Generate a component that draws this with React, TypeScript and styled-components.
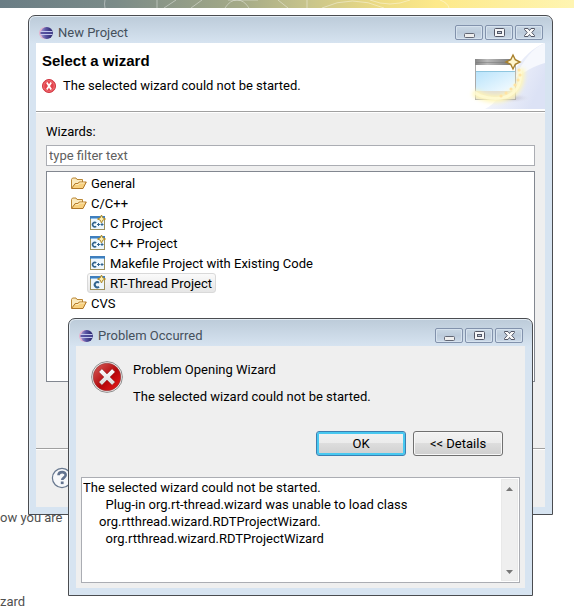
import React from "react";
import styled, { createGlobalStyle, css } from "styled-components";

const Global = createGlobalStyle`
  *, *::before, *::after { box-sizing: border-box; }
  html, body { margin: 0; background: #fff; }
  body, button, input, textarea {
    font-family: Roboto, "Noto Sans", sans-serif;
    font-size: 13px;
    line-height: 17px;
    color: #000;
  }
  h1, h2, p, ul { margin: 0; padding: 0; font-weight: 400; font-size: 13px; }
`;

const Page = styled.div`
  position: relative;
  min-height: 100vh;
  overflow: hidden;
  display: flex;
  flex-direction: column;
`;

const Banner = styled.svg`
  display: block;
  width: 100%;
  height: 8px;
`;

const Article = styled.main`
  display: flex;
  flex-direction: column;
  gap: 67px;
  padding-top: 501px;
  color: #505050;
  white-space: nowrap;
`;

const WindowFrame = styled.section<{ $top: number; $left: number; $right: number; $height: number }>`
  position: absolute;
  top: ${(p) => p.$top}px;
  left: ${(p) => p.$left}px;
  right: ${(p) => p.$right}px;
  min-height: ${(p) => p.$height}px;
  display: flex;
  flex-direction: column;
  padding: 0 7px 7px;
  border: 1px solid #4a4c50;
  border-radius: 7px 7px 0 0;
  background: linear-gradient(#bccbd9, #d7e4f1 28px);
  box-shadow: inset 0 1px #e4edf5, inset 1px 0 #e4edf5;
`;

const TitleBar = styled.header`
  display: flex;
  align-items: center;
  gap: 5px;
  height: 27px;
  padding: 6px 2px 0 3px;
`;

const Title = styled.h1`
  flex: 1;
  color: #45505c;
`;

const Captions = styled.div`
  display: flex;
  gap: 2px;
`;

const CaptionButton = styled.button`
  display: grid;
  place-items: center;
  width: 28px;
  height: 15px;
  padding: 0;
  border: 1px solid #8292ac;
  border-radius: 2px;
  background: linear-gradient(#cad8e5, #bccbdb 50%, #cbd9e8);
  box-shadow: inset 0 0 0 1px #d6e2ee;
`;

const Client = styled.div`
  flex: 1;
  display: flex;
  flex-direction: column;
  background: #efefef;
`;

const WizardHeader = styled.div`
  display: flex;
  justify-content: space-between;
  height: 69px;
  padding-left: 6px;
  border-bottom: 1px solid #a0a0a0;
  background: #fff;
`;

const HeaderText = styled.div`
  display: flex;
  flex-direction: column;
  gap: 8px;
  padding-top: 9px;
`;

const HeaderTitle = styled.h2`
  font: 700 15px/17px "Liberation Sans", Arial, sans-serif;
`;

const Message = styled.p`
  display: flex;
  align-items: center;
  gap: 7px;
`;

const WizardBody = styled.div`
  flex: 1;
  display: flex;
  flex-direction: column;
  padding: 10px 10px 66px;
  border-top: 1px solid #fff;
`;

const FilterLabel = styled.label`
  margin-bottom: 5px;
`;

const Filter = styled.input`
  width: 100%;
  height: 21px;
  margin-bottom: 5px;
  padding: 0 2px;
  border: 1px solid #abadb3;
  background: #fff;
  &::placeholder { color: #606060; opacity: 1; }
`;

const Tree = styled.ul`
  flex: 1;
  padding: 1px 0;
  border: 1px solid #828790;
  background: #fff;
  list-style: none;
`;

const TreeItem = styled.li<{ $level: number }>`
  display: flex;
  align-items: center;
  height: 20px;
  padding-left: ${(p) => (p.$level === 1 ? 21 : 40)}px;
`;

const ItemLabel = styled.span<{ $selected?: boolean }>`
  display: flex;
  align-items: center;
  gap: 4px;
  height: 20px;
  padding: 0 3px 0 2px;
  border: 1px solid transparent;
  border-radius: 3px;
  ${(p) =>
    p.$selected &&
    css`
      border-color: #d9d9d9;
      background: linear-gradient(#fafafa, #e6e6e6);
    `}
`;

const WizardFooter = styled.footer`
  height: 59px;
  padding: 18px 15px;
  border-top: 1px solid #a0a0a0;
  box-shadow: inset 0 1px #fff;
`;

const IconButton = styled.button`
  display: block;
  padding: 0;
  border: 0;
  background: none;
`;

const Problem = styled.div`
  display: flex;
  gap: 10px;
  padding: 15px 15px 0;
`;

const ProblemText = styled.div`
  display: flex;
  flex-direction: column;
  gap: 10px;
`;

const Actions = styled.div`
  display: flex;
  justify-content: flex-end;
  gap: 7px;
  padding: 26px 22px 21px;
`;

const PushButton = styled.button<{ $primary?: boolean }>`
  width: 90px;
  height: 25px;
  padding: 0;
  border: 1px solid ${(p) => (p.$primary ? "#3c7fb1" : "#707070")};
  border-radius: 3px;
  background: linear-gradient(#f2f2f2, #ebebeb 50%, #dddddd 50%, #cfcfcf);
  box-shadow: inset 0 0 0 ${(p) => (p.$primary ? "2px #48c8f0" : "1px #f7f7f7")};
`;

const DetailsBox = styled.div`
  display: flex;
  height: 106px;
  margin: 0 5px;
  padding: 1px;
  border: 1px solid #abadb3;
  background: #fff;
`;

const DetailsText = styled.textarea`
  flex: 1;
  min-width: 0;
  padding: 0;
  border: 0;
  outline: 0;
  resize: none;
  overflow: hidden;
  white-space: pre;
  background: transparent;
`;

const ScrollTrack = styled.div`
  display: flex;
  flex-direction: column;
  justify-content: space-between;
  width: 17px;
  border: 1px solid #e9e9e9;
  background: #efefef;
`;

const ScrollButton = styled.button`
  display: grid;
  place-items: center;
  height: 17px;
  padding: 0;
  border: 0;
  background: none;
`;

const EclipseIcon = () => (
  <svg width="14" height="14" viewBox="0 0 14 14" aria-hidden="true">
    <defs>
      <linearGradient id="ecl">
        <stop offset="0" stopColor="#a99bcf" />
        <stop offset=".4" stopColor="#5b57a5" />
        <stop offset="1" stopColor="#252067" />
      </linearGradient>
    </defs>
    <circle cx="6" cy="7" r="6" fill="#e3b3cf" />
    <circle cx="7.8" cy="7" r="6.1" fill="url(#ecl)" />
    <path d="M1.500 5.500h12M1.500 8.500h12" stroke="#c3c8ec" />
    <path d="M1.500 7h12" stroke="#4d4a99" strokeWidth="1.600" />
  </svg>
);

const SmallError = () => (
  <svg width="14" height="14" viewBox="0 0 14 14" aria-hidden="true">
    <circle cx="7" cy="7" r="6.500" fill="#e4434c" stroke="#cf3640" />
    <circle cx="7" cy="7" r="5.300" fill="none" stroke="#f07c80" strokeWidth=".8" />
    <path d="M4.800 3.500l4.400 7M9.200 3.500l-4.400 7" stroke="#fff" strokeWidth="1.700" />
  </svg>
);

const BigError = () => (
  <svg width="32" height="32" viewBox="0 0 32 32" aria-hidden="true">
    <defs>
      <linearGradient id="red" x1="0" y1="0" x2="1" y2="1">
        <stop offset="0" stopColor="#d9635e" />
        <stop offset=".45" stopColor="#b9181a" />
        <stop offset=".55" stopColor="#b50508" />
        <stop offset="1" stopColor="#ee1c1c" />
      </linearGradient>
      <linearGradient id="cross" x1="0" y1="0" x2="0" y2="1">
        <stop offset="0" stopColor="#fff" />
        <stop offset="1" stopColor="#d8d8d8" />
      </linearGradient>
    </defs>
    <circle cx="16" cy="16" r="15.400" fill="#f6f6f6" stroke="#8d8d8d" />
    <circle cx="16" cy="16" r="13.800" fill="url(#red)" stroke="#8b3635" strokeWidth=".6" />
    <path
      d="M7.800 10.900l3.100-3.100 5.100 5.100 5.100-5.100 3.100 3.100-5.100 5.100 5.100 5.100-3.100 3.100-5.100-5.100-5.100 5.100-3.100-3.100 5.100-5.100z"
      fill="url(#cross)"
      stroke="#8d1515"
      strokeWidth=".5"
    />
  </svg>
);

const FolderIcon = () => (
  <svg width="16" height="16" viewBox="0 0 16 16" aria-hidden="true">
    <path d="M.5 13V4.500l1-1.500h3.500l1 1.500h5.500v3" fill="#fbe9bd" stroke="#b98634" />
    <path d="M.5 13.500l3.700-5h2.800l1.200-1.500h7.100l-3.300 6.500z" fill="#f7d07f" stroke="#b07627" />
    <path d="M4.800 9.500h2.700l1.200-1.500h5" fill="none" stroke="#fdecc0" />
  </svg>
);

const Sparkle = () => (
  <path d="M11.500 0l1.200 2.800 2.800 1.200-2.800 1.200-1.200 2.800-1.200-2.800L7.500 4l2.800-1.200z" fill="#fdf0b4" stroke="#b08a28" />
);

const ProjectIcon = ({ plus, isNew }: { plus: boolean; isNew: boolean }) => (
  <svg width="16" height="16" viewBox="0 0 16 16" aria-hidden="true">
    <rect x=".5" y="1.500" width="14" height="13" fill="#eef7fd" stroke="#9b8f5c" />
    <rect x="0" y="1" width="15" height="3" fill="#3f7fbd" />
    <path d="M1 3.500h13" stroke="#8bbce6" />
    {plus ? (
      <>
        <path d="M6.200 7.900a2.200 2.200 0 1 0 0 3.400" fill="none" stroke="#31648f" strokeWidth="1.600" />
        <path d="M7 9.500h3M8.500 8v3M10.500 9.500h3M12 8v3" stroke="#31648f" />
      </>
    ) : (
      <path d="M9 7.700a2.600 2.600 0 1 0 0 4" fill="none" stroke="#31648f" strokeWidth="2" />
    )}
    {isNew && <Sparkle />}
  </svg>
);

const HelpIcon = () => (
  <svg width="22" height="22" viewBox="0 0 22 22" aria-hidden="true">
    <circle cx="11" cy="11" r="9.600" fill="#f7f8fa" stroke="#68788f" strokeWidth="1.200" />
    <path d="M7.500 8.300c.2-4.200 7.300-4.100 7.200-.2 0 2.500-3.500 2.500-3.500 5" fill="none" stroke="#62738f" strokeWidth="2.600" />
    <rect x="9.800" y="14.500" width="2.800" height="2.600" fill="#62738f" />
  </svg>
);

const WizardArt = () => (
  <svg width="80" height="66" viewBox="0 0 80 66" aria-hidden="true">
    <defs>
      <linearGradient id="sweep" x1="0" y1="0" x2="1" y2=".5">
        <stop offset="0" stopColor="#fff" />
        <stop offset="1" stopColor="#dce2f5" />
      </linearGradient>
      <linearGradient id="bar">
        <stop offset="0" stopColor="#858585" />
        <stop offset=".3" stopColor="#b9b9b9" />
        <stop offset="1" stopColor="#6f6f6f" />
      </linearGradient>
      <linearGradient id="sky" x1="0" y1="0" x2="1" y2="1">
        <stop offset="0" stopColor="#b8e3fb" />
        <stop offset="1" stopColor="#f6fcff" />
      </linearGradient>
      <radialGradient id="shade">
        <stop offset="0" stopColor="#a9a7b9" />
        <stop offset="1" stopColor="#e9ebf8" stopOpacity="0" />
      </radialGradient>
      <filter id="glow" x="-30%" y="-30%" width="160%" height="160%">
        <feGaussianBlur stdDeviation="2" />
      </filter>
    </defs>
    <path d="M20 66C42 57 44 15 80 0v66z" fill="url(#sweep)" />
    <path d="M80 0v20C68 23 62 28 50 35 58 18 67 5 80 0z" fill="#f6f8fd" />
    <ellipse cx="44" cy="55" rx="23" ry="5" fill="url(#shade)" />
    <rect x="10.500" y="16.500" width="40" height="40" fill="#fff" stroke="#aaa" />
    <rect x="10" y="16" width="41" height="6" fill="url(#bar)" />
    <path d="M11 19.500h36" stroke="#777" strokeOpacity=".5" />
    <rect x="11" y="28" width="39" height="20" fill="url(#sky)" />
    <path d="M11 28.500h39" stroke="#8ec6df" />
    <rect x="11" y="48" width="39" height="8" fill="#e4e0d3" />
    <path d="M9 49c13 11 50 12 47-23" fill="none" stroke="#fff6b8" strokeWidth="7" filter="url(#glow)" />
    <path d="M9 49c14 11 51 11 46-23" fill="none" stroke="#fffbd9" strokeWidth="3" strokeOpacity=".7" />
    <path d="M36 53h.1M41 50h.1M46 46h.1M50 42h.1M53 37h.1M55 32h.1M54 27h.1" stroke="#ffe3a3" strokeWidth="3" strokeLinecap="round" />
    <path d="M48 12l2.300 4.700L55 19l-4.700 2.300L48 26l-2.300-4.700L41 19l4.700-2.300z" fill="#fff6cf" stroke="#a8802c" strokeWidth="1.400" />
  </svg>
);

const Glyphs: Record<string, React.ReactNode> = {
  Minimize: <rect x="1.500" y="6.500" width="10" height="4" rx="1" fill="#eee" stroke="#626774" />,
  Maximize: (
    <>
      <rect x="1.500" y="1.500" width="10" height="8" rx="1" fill="#f5f6f8" stroke="#535766" />
      <rect x="4.500" y="4.500" width="4" height="2" fill="#bdcada" stroke="#535766" />
    </>
  ),
  Close: (
    <path
      d="M1.500 1.500h3.500l1.500 2 1.500-2h3.500v1l-2.700 3 2.700 3v1H8l-1.500-2-1.500 2H1.500v-1l2.700-3-2.700-3z"
      fill="#f8f8f8"
      stroke="#535766"
    />
  ),
};

const WindowTitle = ({ title }: { title: string }) => (
  <TitleBar>
    <EclipseIcon />
    <Title>{title}</Title>
    <Captions>
      {Object.keys(Glyphs).map((name) => (
        <CaptionButton key={name} type="button" aria-label={name}>
          <svg width="13" height="11" viewBox="0 0 13 11" aria-hidden="true">
            {Glyphs[name]}
          </svg>
        </CaptionButton>
      ))}
    </Captions>
  </TitleBar>
);

type Entry = { label: string; level: 1 | 2; plus?: boolean; isNew?: boolean; selected?: boolean };

const entries: Entry[] = [
  { label: "General", level: 1 },
  { label: "C/C++", level: 1 },
  { label: "C Project", level: 2, plus: true, isNew: true },
  { label: "C++ Project", level: 2, plus: true, isNew: true },
  { label: "Makefile Project with Existing Code", level: 2, plus: true },
  { label: "RT-Thread Project", level: 2, isNew: true, selected: true },
  { label: "CVS", level: 1 },
];

const details = [
  "The selected wizard could not be started.",
  "       Plug-in org.rt-thread.wizard was unable to load class",
  "     org.rtthread.wizard.RDTProjectWizard.",
  "       org.rtthread.wizard.RDTProjectWizard",
].join("\n");

export default function App() {
  return (
    <>
      <Global />
      <Page>
        <Banner viewBox="0 0 574 8" preserveAspectRatio="none" aria-hidden="true">
          <defs>
            <linearGradient id="banner">
              <stop offset="0" stopColor="#6a7d85" />
              <stop offset=".2" stopColor="#7b8b88" />
              <stop offset=".42" stopColor="#a5aa87" />
              <stop offset=".54" stopColor="#c9c58b" />
              <stop offset=".66" stopColor="#ecdb83" />
              <stop offset=".76" stopColor="#fde98a" />
              <stop offset="1" stopColor="#fff5b2" />
            </linearGradient>
          </defs>
          <rect width="574" height="8" fill="url(#banner)" />
          <path
            d="M105 0q-1 4 0 8M157 0v8M176 0l-12 8M202 0l-11 8M225 8q5-8 12-8t12 8M228 0h30M278 0l10 8M307 0v8M322 8q30-14 62 0M370 0q20 8 40 0M440 0q8 3 9 8"
            fill="none"
            stroke="#fff"
            strokeOpacity=".4"
          />
        </Banner>
        <Article>
          <p>ow you are</p>
          <p>zard</p>
        </Article>

        <WindowFrame $top={15} $left={28} $right={21} $height={500} aria-label="New Project">
          <WindowTitle title="New Project" />
          <Client>
            <WizardHeader>
              <HeaderText>
                <HeaderTitle>Select a wizard</HeaderTitle>
                <Message>
                  <SmallError />
                  The selected wizard could not be started.
                </Message>
              </HeaderText>
              <WizardArt />
            </WizardHeader>
            <WizardBody>
              <FilterLabel htmlFor="filter">Wizards:</FilterLabel>
              <Filter id="filter" type="text" placeholder="type filter text" />
              <Tree role="tree" aria-label="Wizards">
                {entries.map((e) => (
                  <TreeItem key={e.label} role="treeitem" aria-level={e.level} aria-selected={!!e.selected} $level={e.level}>
                    <ItemLabel $selected={e.selected}>
                      {e.level === 1 ? <FolderIcon /> : <ProjectIcon plus={!!e.plus} isNew={!!e.isNew} />}
                      {e.label}
                    </ItemLabel>
                  </TreeItem>
                ))}
              </Tree>
            </WizardBody>
            <WizardFooter>
              <IconButton type="button" aria-label="Help">
                <HelpIcon />
              </IconButton>
            </WizardFooter>
          </Client>
        </WindowFrame>

        <WindowFrame $top={318} $left={68} $right={41} $height={278} role="dialog" aria-label="Problem Occurred">
          <WindowTitle title="Problem Occurred" />
          <Client>
            <Problem>
              <BigError />
              <ProblemText>
                <p>Problem Opening Wizard</p>
                <p>The selected wizard could not be started.</p>
              </ProblemText>
            </Problem>
            <Actions>
              <PushButton type="button" $primary>
                OK
              </PushButton>
              <PushButton type="button">&lt;&lt; Details</PushButton>
            </Actions>
            <DetailsBox>
              <DetailsText aria-label="Details" readOnly value={details} />
              <ScrollTrack>
                <ScrollButton type="button" aria-label="Scroll up">
                  <svg width="7" height="4" viewBox="0 0 7 4"><path d="M3.500 0L7 4H0z" fill="#777" /></svg>
                </ScrollButton>
                <ScrollButton type="button" aria-label="Scroll down">
                  <svg width="7" height="4" viewBox="0 0 7 4"><path d="M0 0h7L3.500 4z" fill="#777" /></svg>
                </ScrollButton>
              </ScrollTrack>
            </DetailsBox>
          </Client>
        </WindowFrame>
      </Page>
    </>
  );
}
